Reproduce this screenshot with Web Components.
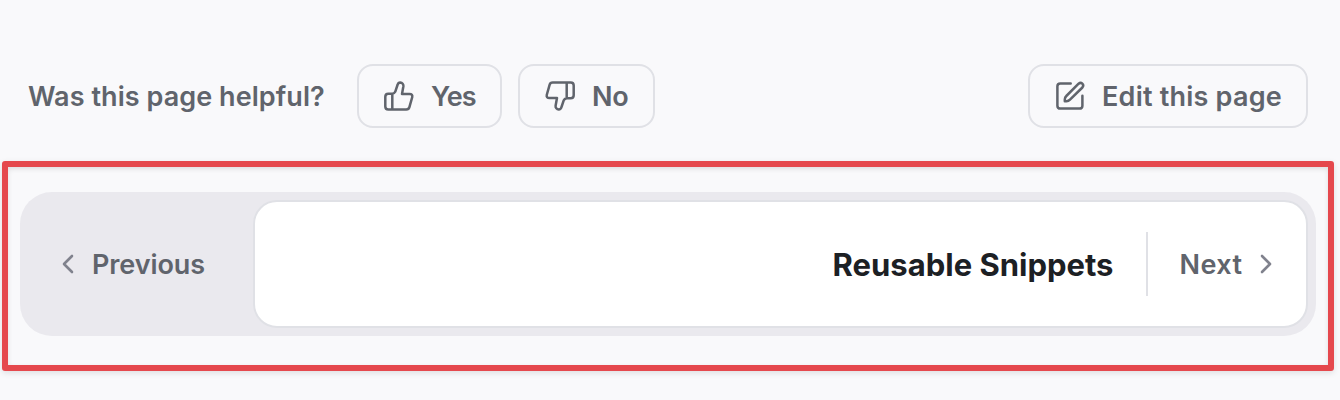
<!DOCTYPE html>
<html lang="en">
<head>
<meta charset="utf-8">
<title>Page navigation</title>
<style>
body{margin:0;background:#f9f9fb;color:#60646c;font:600 27px/32px Inter,"Liberation Sans",sans-serif}
</style>
</head>
<body>
<docs-footer></docs-footer>
<script>
const define = (name, html) => {
  const t = document.createElement('template');
  t.innerHTML = html;
  customElements.define(name, class extends HTMLElement {
    constructor() {
      super();
      this.attachShadow({mode: 'open'}).append(t.content.cloneNode(true));
    }
  });
};

const stroke = 'fill="none" stroke="currentColor" stroke-width="2.5" stroke-linecap="round" stroke-linejoin="round"';
const thumb = `<path d="M9.3 13.8V29.6M5.3 13.8H9.3C10.8 13.6 11.7 12.8 12.2 11.8L14.5 5C15 3.2 15.8 2.5 17.2 2.5C19.3 2.7 20.7 4.3 20.4 6.3L19 13.9H26.5C28.7 13.9 29.7 15.3 29.2 17.2L26.4 27.2C25.9 29 25 29.6 23.3 29.6H5.3Q2.3 29.6 2.3 26.6V16.8Q2.3 13.8 5.3 13.8Z"/>`;
const iconStyle = '<style>:host{display:block;flex:none;width:32px;height:32px}svg{display:block}</style>';
define('icon-thumb-up', `${iconStyle}<svg width="32" height="32" ${stroke}>${thumb}</svg>`);
define('icon-thumb-down', `${iconStyle}<svg width="32" height="32" ${stroke}><g transform="rotate(180 16 16)">${thumb}</g></svg>`);
define('icon-edit', `${iconStyle}<svg width="32" height="32" ${stroke}><g transform="translate(1 0)"><path d="M15.7 3.4H5.3Q2.4 3.4 2.4 6.3V25.7Q2.4 28.6 5.3 28.6H24.5Q27.4 28.6 27.4 25.7V15.8"/><path d="M9.8 21.2V19.4Q9.8 17.4 11.3 16L23.6 3.7C26.2 1.5 29.7 4.6 27.4 7.5L15 19.7Q13.5 21.2 11.5 21.2Z"/></g></svg>`);
define('icon-chevron', `<style>:host{display:block;flex:none;width:12px;height:20px;color:#80828d}:host([left]){transform:scaleX(-1)}svg{display:block}</style>
<svg width="12" height="20" fill="none" stroke="currentColor" stroke-width="2.6" stroke-linecap="round" stroke-linejoin="round"><path d="M2 2L10 10L2 18"/></svg>`);

define('outline-button', `<style>
:host{display:flex;align-items:center;box-sizing:border-box;height:64px;border:2px solid #e0e1e6;border-radius:16px;padding-left:24px;gap:16px;white-space:nowrap}
::slotted(span){padding-top:2px}
</style><slot name="icon"></slot><slot></slot>`);

define('feedback-bar', `<style>
:host{display:flex;align-items:center;height:64px;padding:64px 32px 0 28px;white-space:nowrap}
.q{width:329px;padding-top:2px;letter-spacing:.06px}
.yes{width:145px;margin-right:16px;letter-spacing:-.9px}
.no{width:137px;margin-right:auto;letter-spacing:-.2px}
.edit{width:280px;letter-spacing:.22px}
</style>
<span class="q">Was this page helpful?</span>
<outline-button class="yes"><icon-thumb-up slot="icon"></icon-thumb-up><span>Yes</span></outline-button>
<outline-button class="no"><icon-thumb-down slot="icon"></icon-thumb-down><span>No</span></outline-button>
<outline-button class="edit"><icon-edit slot="icon"></icon-edit><span>Edit this page</span></outline-button>`);

define('next-card', `<style>
:host{display:flex;align-items:center;justify-content:flex-end;box-sizing:border-box;flex:1;border:2px solid #e0e1e6;border-radius:24px;background:#fff;padding-right:34px;white-space:nowrap}
.title{padding-top:2px;font-weight:700;font-size:31px;color:#1c2024}
.rule{width:2px;height:64px;background:#e0e1e6;margin:0 32px}
.next{width:80px;padding-top:2px;letter-spacing:.4px}
</style>
<span class="title"><slot></slot></span><span class="rule"></span><span class="next">Next</span><icon-chevron></icon-chevron>`);

define('page-pager', `<style>
:host{display:flex;box-sizing:border-box;height:144px;padding:8px;border-radius:32px;background:#eae9ee}
.prev{display:flex;align-items:center;box-sizing:border-box;width:225px;padding-left:34px;gap:18px}
.prev span{padding-top:2px;letter-spacing:-.1px}
</style>
<div class="prev"><icon-chevron left></icon-chevron><span>Previous</span></div>
<next-card>Reusable Snippets</next-card>`);

define('highlight-frame', `<style>
:host{display:block;box-sizing:border-box;margin:33px 6.5px 0 2px;height:210px;border:6px solid #e5484d;border-radius:3px;padding:25px 12px 0;box-shadow:0 2px 6px #0000001c,inset 0 2px 5px #0000001c}
</style><slot></slot>`);

define('docs-footer', `<style>:host{display:block;height:400px;overflow:hidden}</style>
<feedback-bar></feedback-bar>
<highlight-frame><page-pager></page-pager></highlight-frame>`);
</script>
</body>
</html>
